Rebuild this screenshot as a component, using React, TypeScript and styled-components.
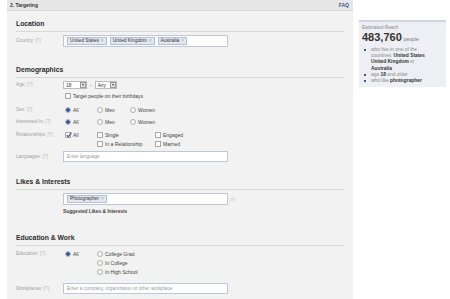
import styled, { createGlobalStyle } from "styled-components";

const Global = createGlobalStyle`
  html, body { margin: 0; padding: 0; background: #fff; }
  body { font-family: "Liberation Sans", Arial, sans-serif; color: #333; }
`;

const Page = styled.div`
  display: flex;
  align-items: flex-start;
  padding-left: 7px;
  width: 450px;
  height: 299px;
  box-sizing: border-box;
  overflow: hidden;
`;

const Panel = styled.div`
  width: 346px;
  height: 299px;
  background: #f2f2f2;
  flex-shrink: 0;
`;

const PanelHeader = styled.div`
  height: 10px;
  background: #e6e6e6;
  border-bottom: 1px solid #d6d6d6;
  display: flex;
  align-items: center;
  justify-content: space-between;
  padding: 0 4px 0 3px;
  font-size: 5px;
  font-weight: bold;
  color: #333;
`;

const Faq = styled.span`
  color: #3b5998;
`;

const Body = styled.div`
  padding: 0 9px;
  display: flex;
  flex-direction: column;
`;

const Heading = styled.div<{ $top: number }>`
  margin-top: ${(p) => p.$top}px;
  font-size: 6.8px;
  font-weight: bold;
  line-height: 10px;
  height: 10px;
  padding-bottom: 2px;
  border-bottom: 1px solid #d9d9d9;
  color: #2a2a2a;
`;

const Row = styled.div<{ $top: number; $h?: number }>`
  margin-top: ${(p) => p.$top}px;
  display: flex;
  align-items: ${(p) => (p.$h ? "flex-start" : "center")};
  min-height: ${(p) => p.$h ?? 8}px;
`;

const Label = styled.div`
  width: 47px;
  flex-shrink: 0;
  font-size: 4.8px;
  color: #a0a0a0;
  line-height: 8px;
`;

const Help = styled.span`
  color: #b8b8b8;
`;

const Input = styled.div<{ $h?: number }>`
  width: 165px;
  height: ${(p) => p.$h ?? 12}px;
  box-sizing: border-box;
  background: #fff;
  border: 1px solid #bdc7d8;
  display: flex;
  align-items: center;
  gap: 3px;
  padding-left: 3px;
  font-size: 4.8px;
  color: #9a9a9a;
`;

const Token = styled.span`
  background: #e2e6f0;
  border: 1px solid #b4bed6;
  color: #333;
  font-size: 4.8px;
  line-height: 6px;
  padding: 0 2px;
  white-space: nowrap;
`;

const X = styled.span`
  color: #9aa6c0;
  margin-left: 2px;
`;

const Options = styled.div<{ $cols: string }>`
  display: grid;
  grid-template-columns: ${(p) => p.$cols};
  row-gap: 1px;
  align-items: center;
`;

const Option = styled.div`
  display: flex;
  align-items: center;
  gap: 2px;
  padding-left: 2px;
  font-size: 5px;
  color: #444;
  line-height: 8px;
  white-space: nowrap;
`;

const Radio = styled.span<{ $on?: boolean }>`
  width: 6px;
  height: 6px;
  box-sizing: border-box;
  border-radius: 50%;
  border: 1px solid #b0b0b0;
  background: ${(p) =>
    p.$on ? "radial-gradient(circle, #2f5aa0 0 1.6px, #dfe6f2 2px)" : "#f8f8f8"};
  flex-shrink: 0;
`;

const Box = styled.span`
  width: 6px;
  height: 6px;
  box-sizing: border-box;
  border: 1px solid #a8a8a8;
  background: #fafafa;
  flex-shrink: 0;
  position: relative;
  display: inline-flex;
`;

const Check = () => (
  <svg width="6" height="6" viewBox="0 0 6 6" style={{ position: "absolute", left: 0, top: -1 }}>
    <path d="M0.8 3.2 L2.3 4.8 L5.4 0.6" stroke="#2f5aa0" strokeWidth="1.1" fill="none" />
  </svg>
);

const SelectBox = styled.div<{ $w: number }>`
  width: ${(p) => p.$w}px;
  height: 8px;
  box-sizing: border-box;
  background: #fff;
  border: 1px solid #bbb;
  display: flex;
  align-items: center;
  justify-content: space-between;
  padding-left: 2px;
  font-size: 4.8px;
  color: #333;
`;

const Arrow = styled.span`
  width: 6px;
  height: 6px;
  box-sizing: border-box;
  border: 1px solid #999;
  background: #e8e8e8;
  display: flex;
  align-items: center;
  justify-content: center;
  &::after {
    content: "";
    border-left: 1.5px solid transparent;
    border-right: 1.5px solid transparent;
    border-top: 2px solid #333;
  }
`;

const Dash = styled.span`
  font-size: 5px;
  color: #555;
  margin: 0 3px;
`;

const SubRow = styled.div`
  display: flex;
  align-items: center;
`;

const Suggested = styled.div`
  margin-top: 3px;
  margin-left: 47px;
  font-size: 4.8px;
  font-weight: bold;
  color: #444;
  line-height: 8px;
`;

const HelpAfter = styled.span`
  font-size: 4.4px;
  color: #bbb;
  margin-left: 2px;
`;

const Reach = styled.div`
  margin-left: 6px;
  margin-top: 20px;
  width: 87px;
  box-sizing: border-box;
  background: #edeff4;
  border-top: 2px solid #cdd4e2;
  padding: 2px 3px 3px;
`;

const ReachTitle = styled.div`
  font-size: 4.8px;
  color: #8a8a8a;
  line-height: 8px;
`;

const ReachCount = styled.div`
  font-size: 11px;
  font-weight: bold;
  color: #333;
  line-height: 11px;
  & span {
    font-size: 5px;
    font-weight: normal;
    color: #777;
    margin-left: 2px;
  }
`;

const List = styled.ul`
  list-style: none;
  margin: 2px 0 0;
  padding: 0 10px 0 0;
`;

const Item = styled.li`
  position: relative;
  padding-left: 9px;
  font-size: 4.9px;
  line-height: 6.2px;
  color: #888;
  & b { color: #333; }
  &::before {
    content: "";
    position: absolute;
    left: 2px;
    top: 2px;
    width: 2px;
    height: 2px;
    background: #3b5998;
  }
`;

const Line = styled.span`
  display: block;
`;

const Field = (props: { label: string }) => (
  <Label>
    {props.label}: <Help>[?]</Help>
  </Label>
);

export default function App() {
  return (
    <>
      <Global />
      <Page>
        <Panel>
          <PanelHeader>
            <span>2. Targeting</span>
            <Faq>FAQ</Faq>
          </PanelHeader>
          <Body>
            <Heading $top={8}>Location</Heading>
            <Row $top={3}>
              <Field label="Country" />
              <Input>
                <Token>United States<X>×</X></Token>
                <Token>United Kingdom<X>×</X></Token>
                <Token>Australia<X>×</X></Token>
              </Input>
            </Row>

            <Heading $top={18}>Demographics</Heading>
            <Row $top={3} $h={9}>
              <Field label="Age" />
              <SubRow>
                <SelectBox $w={24}>18<Arrow /></SelectBox>
                <Dash>-</Dash>
                <SelectBox $w={22}>Any<Arrow /></SelectBox>
              </SubRow>
            </Row>
            <Row $top={2}>
              <Label />
              <Option>
                <Box />
                Target people on their birthdays
              </Option>
            </Row>
            <Row $top={6}>
              <Field label="Sex" />
              <Options $cols="32px 33px auto">
                <Option><Radio $on />All</Option>
                <Option><Radio />Men</Option>
                <Option><Radio />Women</Option>
              </Options>
            </Row>
            <Row $top={4}>
              <Field label="Interested In" />
              <Options $cols="32px 33px auto">
                <Option><Radio $on />All</Option>
                <Option><Radio />Men</Option>
                <Option><Radio />Women</Option>
              </Options>
            </Row>
            <Row $top={5} $h={17}>
              <Field label="Relationships" />
              <Options $cols="32px 58px auto">
                <Option><Box><Check /></Box>All</Option>
                <Option><Box />Single</Option>
                <Option><Box />Engaged</Option>
                <span />
                <Option><Box />In a Relationship</Option>
                <Option><Box />Married</Option>
              </Options>
            </Row>
            <Row $top={3}>
              <Field label="Languages" />
              <Input $h={11}>Enter language</Input>
            </Row>

            <Heading $top={15}>Likes &amp; Interests</Heading>
            <Row $top={3}>
              <Label />
              <Input>
                <Token>Photographer<X>×</X></Token>
              </Input>
              <HelpAfter>[?]</HelpAfter>
            </Row>
            <Suggested>Suggested Likes &amp; Interests</Suggested>

            <Heading $top={17}>Education &amp; Work</Heading>
            <Row $top={4} $h={29}>
              <Field label="Education" />
              <Options $cols="32px auto">
                <Option><Radio $on />All</Option>
                <Option><Radio />College Grad</Option>
                <span />
                <Option><Radio />In College</Option>
                <span />
                <Option><Radio />In High School</Option>
              </Options>
            </Row>
            <Row $top={4}>
              <Field label="Workplaces" />
              <Input $h={11}>Enter a company, organization or other workplace</Input>
            </Row>
          </Body>
        </Panel>

        <Reach>
          <ReachTitle>Estimated Reach</ReachTitle>
          <ReachCount>
            483,760<span>people</span>
          </ReachCount>
          <List>
            <Item>
              <Line>who live in one of the</Line>
              <Line>
                countries: <b>United States</b>,
              </Line>
              <Line>
                <b>United Kingdom</b> or
              </Line>
              <Line>
                <b>Australia</b>
              </Line>
            </Item>
            <Item>
              age <b>18</b> and older
            </Item>
            <Item>
              who like <b>photographer</b>
            </Item>
          </List>
        </Reach>
      </Page>
    </>
  );
}
